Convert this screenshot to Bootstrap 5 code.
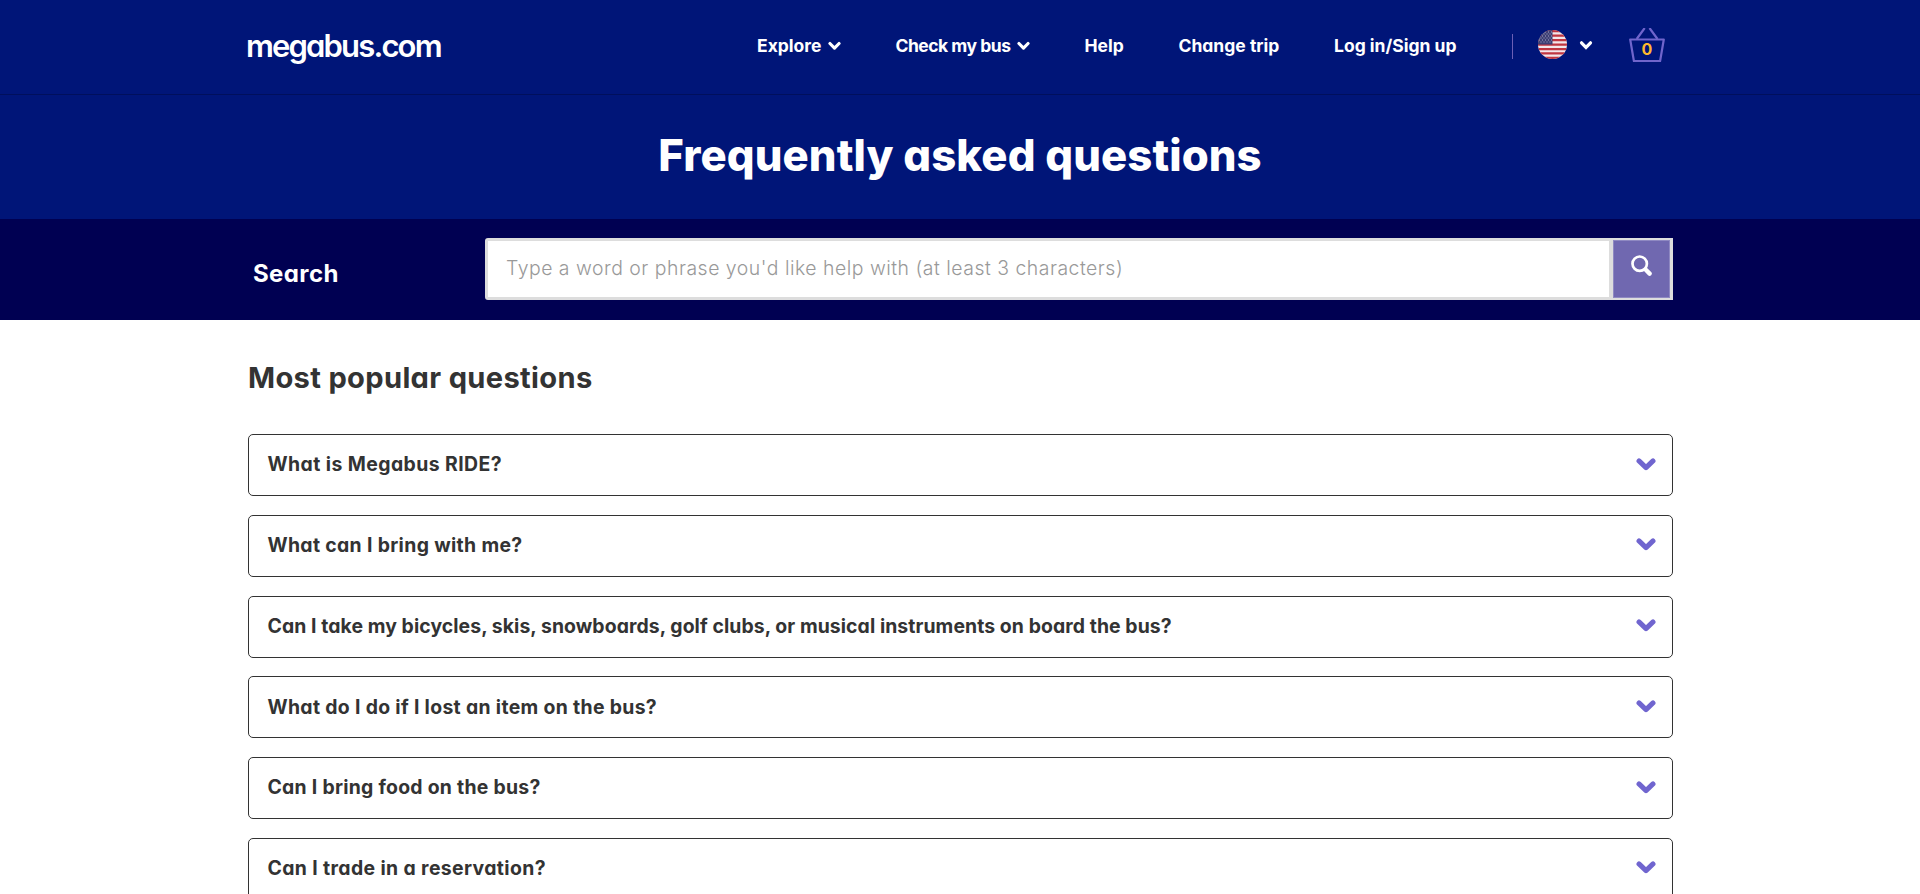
<!DOCTYPE html>
<html lang="en">
<head>
<meta charset="utf-8">
<meta name="viewport" content="width=device-width, initial-scale=1">
<title>Frequently asked questions | megabus.com</title>
<link href="https://cdn.jsdelivr.net/npm/bootstrap@5.3.0/dist/css/bootstrap.min.css" rel="stylesheet">
<style>
body { font-family: Inter, Lato, sans-serif; font-feature-settings: "cv11"; color: #333; background: #fff; overflow: hidden; }
.page-wrap { width: 1425px; margin-left: 248px; }
.site-head { height: 95px; background: #001578; border-bottom: 1px solid #000f5c; }
.site-head .page-wrap { height: 90px; }
.logo { font-size: 31px; font-weight: 600; letter-spacing: -1.85px; line-height: 90px; padding-top: 1px; flex: none; width: 511px; margin-left: -2px; }
.main-menu { display: grid; grid-template-columns: 138.5px 189px 94px 155.5px 177.5px; font-size: 17.5px; font-weight: 700; line-height: 91px; }
.main-menu a { color: #fff; text-decoration: none; white-space: nowrap; }
.main-menu svg { margin: -2px 0 0 7px; }
.head-rule { width: 1px; height: 25px; background: #6b5fb5; margin-top: 3px; }
.hero { height: 124px; background: #001578; }
.hero h1 { font-size: 43.65px; font-weight: 800; letter-spacing: .1px; line-height: 122px; }
.search-band { height: 101px; background: #000052; }
.search-label { width: 237px; padding-left: 5px; font-size: 24px; font-weight: 700; letter-spacing: .4px; line-height: 109px; }
.search-box { width: 1188px; height: 62px; margin-top: 19px; border: 3px solid #ddd; background: #ddd; border-radius: 3px 0 0 3px; }
.search-box .form-control { border: 0; border-radius: 0; height: 56px; padding: 0 18px 2px; font-size: 19.4px; font-weight: 300; letter-spacing: .52px; color: #333; flex: none; width: 1121px; }
.search-box .form-control::placeholder { color: #999; opacity: 1; }
.search-btn { width: 58px; height: 58px; margin: -1px 0 0 4px; background: #7068b0; border: 1px solid #8f89c2; border-radius: 0; padding: 0 0 7px; line-height: 1; }
.popular h2 { font-size: 29.1px; font-weight: 700; letter-spacing: .33px; line-height: 40px; margin: 38px 0 36px; }
.faq { display: flex; flex-direction: column; gap: 18.75px; }
.faq-item { height: 62px; flex: none; border: 1px solid #333; border-radius: 5px; padding: 0 16px 2px 18.5px; font-size: 19.4px; font-weight: 700; background: #fff; color: #333; }
.faq-item span { padding-top: 2px; }
.ls-a { letter-spacing: .43px; } .ls-b { letter-spacing: .34px; } .ls-c { letter-spacing: .08px; }
.ls-d { letter-spacing: .33px; } .ls-e { letter-spacing: .27px; } .ls-f { letter-spacing: .38px; }
.ls-tight { letter-spacing: -.5px; }
.basket { width: 36px; height: 35px; margin-left: 36px; }
.lang-flag { margin-top: -2px; }
.lang-arrow { margin-left: 11px; }
</style>
<script src="https://cdn.jsdelivr.net/npm/bootstrap@5.3.0/dist/js/bootstrap.bundle.min.js"></script>
</head>
<body>
<svg width="0" height="0" class="position-absolute" aria-hidden="true">
  <symbol id="chev" viewBox="0 0 12 9"><path d="M1.800 2.200 6 6.400l4.200-4.200" fill="none" stroke="currentColor" stroke-width="2.900" stroke-linecap="round" stroke-linejoin="round"/></symbol>
  <symbol id="chev-lg" viewBox="0 0 20 13"><path d="M3 2.900 10 9.600l7-6.700" fill="none" stroke="currentColor" stroke-width="5" stroke-linecap="round" stroke-linejoin="round"/></symbol>
</svg>
<header class="site-head text-white">
  <div class="page-wrap d-flex align-items-center">
    <div class="logo">megabus.com</div>
    <nav class="main-menu">
      <a href="#">Explore<svg width="13" height="10"><use href="#chev"/></svg></a>
      <a href="#"><span class="ls-tight">Check my bus</span><svg width="13" height="10"><use href="#chev"/></svg></a>
      <a href="#">Help</a>
      <a href="#">Change trip</a>
      <a href="#">Log in/Sign up</a>
    </nav>
    <div class="head-rule"></div>
    <svg class="ms-4 lang-flag" width="31" height="31" viewBox="0 0 31 31">
      <defs><clipPath id="disc"><circle cx="15.500" cy="15.500" r="14.500"/></clipPath></defs>
      <g clip-path="url(#disc)">
        <path fill="#f3e6ea" d="M0 0h31v31H0z"/>
        <path stroke="#c03540" stroke-width="2.250" d="M0 2.200h31M0 6.650h31M0 11.100h31M0 15.550h31M0 20h31M0 24.450h31M0 28.900h31"/>
        <path fill="#3d3f74" d="M0 0h15.500v15.500H0z"/>
        <path stroke="#a9abc8" stroke-width="1" stroke-dasharray="1 2" d="M2 3h13M3.500 5h12M2 7h13M3.500 9h12M2 11h13M3.500 13h12"/>
      </g>
    </svg>
    <svg class="lang-arrow" width="14" height="11" viewBox="0 0 14 11"><path d="M2.500 2.800 7 7.400l4.500-4.600" fill="none" stroke="#fff" stroke-width="3.200" stroke-linecap="round"/></svg>
    <svg class="basket" viewBox="0 0 36 35">
      <g fill="none" stroke="#7065cc" stroke-width="2.200" stroke-linejoin="round"><path d="M1.200 11.500h33.600l-3.700 21.500H4.900z"/><path d="m7.700 11 8-11M28.500 11l-8-11"/></g>
      <text x="18" y="26.500" text-anchor="middle" font-size="16" font-weight="700" fill="#ffb92e">0</text>
    </svg>
  </div>
</header>
<section class="hero text-center text-white"><h1 class="m-0">Frequently asked questions</h1></section>
<section class="search-band">
  <form class="page-wrap d-flex">
    <label class="search-label text-white" for="q">Search</label>
    <div class="search-box d-flex">
      <input id="q" class="form-control" type="text" placeholder="Type a word or phrase you'd like help with (at least 3 characters)">
      <button type="button" class="search-btn" aria-label="Search"><svg width="21" height="21" viewBox="0 0 21 21" fill="none" stroke="#fff" stroke-linecap="round"><circle cx="8.700" cy="8.700" r="7.200" stroke-width="2.700"/><path d="m14.800 14.800 3.800 3.800" stroke-width="4.400"/></svg></button>
    </div>
  </form>
</section>
<main class="page-wrap popular">
  <h2>Most popular questions</h2>
  <div class="faq">
    <div class="faq-item d-flex align-items-center justify-content-between"><span class="ls-a">What is Megabus RIDE?</span><svg width="20" height="13" color="#7065cf"><use href="#chev-lg"/></svg></div>
    <div class="faq-item d-flex align-items-center justify-content-between"><span class="ls-b">What can I bring with me?</span><svg width="20" height="13" color="#7065cf"><use href="#chev-lg"/></svg></div>
    <div class="faq-item d-flex align-items-center justify-content-between"><span class="ls-c">Can I take my bicycles, skis, snowboards, golf clubs, or musical instruments on board the bus?</span><svg width="20" height="13" color="#7065cf"><use href="#chev-lg"/></svg></div>
    <div class="faq-item d-flex align-items-center justify-content-between"><span class="ls-d">What do I do if I lost an item on the bus?</span><svg width="20" height="13" color="#7065cf"><use href="#chev-lg"/></svg></div>
    <div class="faq-item d-flex align-items-center justify-content-between"><span class="ls-e">Can I bring food on the bus?</span><svg width="20" height="13" color="#7065cf"><use href="#chev-lg"/></svg></div>
    <div class="faq-item d-flex align-items-center justify-content-between"><span class="ls-f">Can I trade in a reservation?</span><svg width="20" height="13" color="#7065cf"><use href="#chev-lg"/></svg></div>
  </div>
</main>
</body>
</html>
